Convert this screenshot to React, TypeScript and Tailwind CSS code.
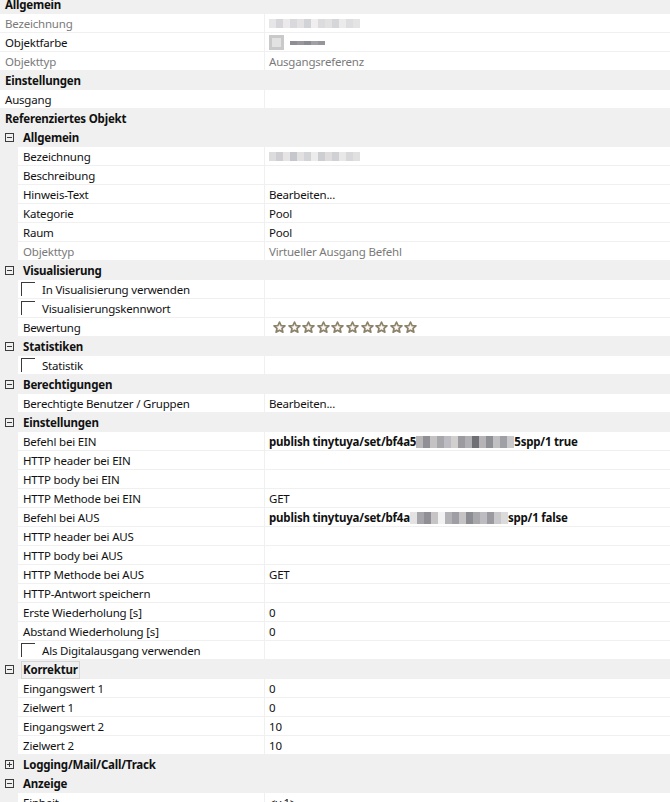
import React from 'react';

type Row =
  | { kind: 'top'; title: string }
  | { kind: 'group'; title: string; open?: boolean; focus?: boolean }
  | { kind: 'prop'; label: string; value?: React.ReactNode; top?: boolean; muted?: boolean; check?: boolean; bold?: boolean };

const font = { fontFamily: '"Noto Sans", "Open Sans", sans-serif' };

const Expander: React.FC<{ open?: boolean }> = ({ open = true }) => (
  <svg width="9" height="9" viewBox="0 0 9 9" className="shrink-0">
    <rect x="0.5" y="0.5" width="8" height="8" fill="none" stroke="#3c3c3c" />
    <line x1="2" y1="4.5" x2="7" y2="4.5" stroke="#3c3c3c" />
    {!open && <line x1="4.5" y1="2" x2="4.5" y2="7" stroke="#3c3c3c" />}
  </svg>
);

const Star: React.FC = () => (
  <svg width="13" height="13" viewBox="0 0 24 24">
    <path
      d="M12 1.8l3 6.5 7.1.7-5.4 4.8 1.6 7L12 17.2l-6.3 3.6 1.6-7L1.9 9l7.1-.7z"
      fill="#e3ddcf"
      stroke="#8d836c"
      strokeWidth="3"
      strokeLinejoin="round"
    />
    <path d="M12 7.5l1.4 3 3.3.4-2.5 2.2.7 3.2L12 14.6l-2.9 1.7.7-3.2-2.5-2.2 3.3-.4z" fill="#fbfaf6" />
  </svg>
);

const Mosaic: React.FC<{ colors: string[]; w?: number; h?: number }> = ({ colors, w = 7, h = 10 }) => (
  <span className="inline-flex align-middle">
    {colors.map((c, i) => (
      <span key={i} className="inline-block" style={{ width: w, height: h, background: c }} />
    ))}
  </span>
);

const paleName = ['#e6e6e8', '#d6d6da', '#ebe9e9', '#d9d9dd', '#e4e2e2', '#d2d3d7', '#f0eeee', '#dcdcdf', '#e3e1e1', '#d5d6da', '#ebebeb', '#dedee1', '#e5e4e4'];

const Stars = () => (
  <div className="flex gap-[1.6px] pl-[4px]">
    {Array.from({ length: 10 }).map((_, i) => (
      <Star key={i} />
    ))}
  </div>
);

const Publish: React.FC<{ prefix: string; suffix: string; colors: string[] }> = ({ prefix, suffix, colors }) => (
  <span className="inline-flex items-center font-bold">
    <span>{prefix}</span>
    <Mosaic colors={colors} w={7} h={12} />
    <span>{suffix}</span>
  </span>
);

const rows: Row[] = [
  { kind: 'top', title: 'Allgemein' },
  { kind: 'prop', top: true, muted: true, label: 'Bezeichnung', value: <Mosaic colors={paleName} w={7} h={9} /> },
  {
    kind: 'prop',
    top: true,
    label: 'Objektfarbe',
    value: (
      <span className="flex items-center gap-[6px]">
        <span className="inline-block w-[15px] h-[15px] bg-[#e2e2e2] border-[3px] border-[#c9c9c9]" />
        <Mosaic colors={['#8e8e96', '#9a969c', '#8a8b94', '#a39fa3', '#95969c']} w={7} h={4} />
      </span>
    ),
  },
  { kind: 'prop', top: true, muted: true, label: 'Objekttyp', value: <span className="text-[#7a7a7a]">Ausgangsreferenz</span> },
  { kind: 'top', title: 'Einstellungen' },
  { kind: 'prop', top: true, label: 'Ausgang' },
  { kind: 'top', title: 'Referenziertes Objekt' },
  { kind: 'group', title: 'Allgemein' },
  { kind: 'prop', label: 'Bezeichnung', value: <Mosaic colors={['#dcdcdf', '#cfcfd3', '#e6e4e4', '#c6c7cc', '#e2e0e0', '#d3d4d8', '#ececec', '#cdced2', '#dedcdc', '#d0d1d5', '#e8e8e8', '#d8d8db', '#e1e0e0']} w={7} h={9} /> },
  { kind: 'prop', label: 'Beschreibung' },
  { kind: 'prop', label: 'Hinweis-Text', value: 'Bearbeiten...' },
  { kind: 'prop', label: 'Kategorie', value: 'Pool' },
  { kind: 'prop', label: 'Raum', value: 'Pool' },
  { kind: 'prop', muted: true, label: 'Objekttyp', value: <span className="text-[#7a7a7a]">Virtueller Ausgang Befehl</span> },
  { kind: 'group', title: 'Visualisierung' },
  { kind: 'prop', check: true, label: 'In Visualisierung verwenden' },
  { kind: 'prop', check: true, label: 'Visualisierungskennwort' },
  { kind: 'prop', label: 'Bewertung', value: <Stars /> },
  { kind: 'group', title: 'Statistiken' },
  { kind: 'prop', check: true, label: 'Statistik' },
  { kind: 'group', title: 'Berechtigungen' },
  { kind: 'prop', label: 'Berechtigte Benutzer / Gruppen', value: 'Bearbeiten...' },
  { kind: 'group', title: 'Einstellungen' },
  {
    kind: 'prop',
    label: 'Befehl bei EIN',
    value: (
      <Publish
        prefix="publish tinytuya/set/bf4a5"
        suffix="5spp/1 true"
        colors={['#b9b6b8', '#8f8f95', '#c4c2c3', '#a7a6ab', '#bcbcc2', '#d2d0cf', '#9b9a9f', '#b0afb4', '#6f6f76', '#b6b4b6', '#8e9096', '#c0bfc2', '#9fa0a6', '#c9c8ca']}
      />
    ),
  },
  { kind: 'prop', label: 'HTTP header bei EIN' },
  { kind: 'prop', label: 'HTTP body bei EIN' },
  { kind: 'prop', label: 'HTTP Methode bei EIN', value: 'GET' },
  {
    kind: 'prop',
    label: 'Befehl bei AUS',
    value: (
      <Publish
        prefix="publish tinytuya/set/bf4a"
        suffix="spp/1 false"
        colors={['#e4e2e3', '#a6a5aa', '#8f8f95', '#c6c4c5', '#f2f2f2', '#b3b2b6', '#9e9ea4', '#c5c3c4', '#8c8c93', '#a8a7ac', '#bdbcc0', '#9a9aa0', '#c9c8ca', '#dcdbdc']}
      />
    ),
  },
  { kind: 'prop', label: 'HTTP header bei AUS' },
  { kind: 'prop', label: 'HTTP body bei AUS' },
  { kind: 'prop', label: 'HTTP Methode bei AUS', value: 'GET' },
  { kind: 'prop', label: 'HTTP-Antwort speichern' },
  { kind: 'prop', label: 'Erste Wiederholung [s]', value: '0' },
  { kind: 'prop', label: 'Abstand Wiederholung [s]', value: '0' },
  { kind: 'prop', check: true, label: 'Als Digitalausgang verwenden' },
  { kind: 'group', title: 'Korrektur', focus: true },
  { kind: 'prop', label: 'Eingangswert 1', value: '0' },
  { kind: 'prop', label: 'Zielwert 1', value: '0' },
  { kind: 'prop', label: 'Eingangswert 2', value: '10' },
  { kind: 'prop', label: 'Zielwert 2', value: '10' },
  { kind: 'group', title: 'Logging/Mail/Call/Track', open: false },
  { kind: 'group', title: 'Anzeige' },
  { kind: 'prop', label: 'Einheit', value: '<v.1>' },
];

const GridRow: React.FC<{ row: Row }> = ({ row }) => {
  if (row.kind === 'top') {
    return (
      <div className="flex items-center h-[19px] bg-[#f0f0f0] pl-[5px] pt-[1px] font-bold">{row.title}</div>
    );
  }
  if (row.kind === 'group') {
    return (
      <div className="flex items-center h-[19px] bg-[#f0f0f0] font-bold">
        <div className="w-[18px] flex justify-center pl-[1px]">
          <Expander open={row.open !== false} />
        </div>
        <span
          className={
            row.focus
              ? 'ml-[3px] pl-[1px] pr-[1px] h-[18px] pt-[1px] flex items-center border border-[#d6d6d6]'
              : 'ml-[5px] pt-[1px]'
          }
        >
          {row.title}
        </span>
      </div>
    );
  }
  return (
    <div className="flex h-[19px]">
      {!row.top && <div className="w-[18px] shrink-0 bg-[#f0f0f0]" />}
      <div
        className={`${row.top ? 'w-[264px]' : 'w-[246px]'} shrink-0 flex items-center pt-[1px] border-b border-[#f0f0f0] ${
          row.check ? 'pl-[3px]' : 'pl-[5px]'
        } ${row.muted ? 'text-[#7a7a7a]' : ''}`}
      >
        {row.check && (
          <span className="inline-block w-[14px] h-[14px] border-l border-t border-[#3a3a3a] mr-[7px] -mt-[1px]" />
        )}
        {row.label}
      </div>
      <div className="w-px bg-[#f0f0f0]" />
      <div className="flex-1 flex items-center pl-[4px] pt-[1px] border-b border-[#f0f0f0] whitespace-nowrap overflow-hidden">
        {row.value}
      </div>
    </div>
  );
};

export default function App() {
  return (
    <div
      className="w-[670px] h-[802px] overflow-hidden bg-white text-[11.5px] tracking-[-0.2px] text-[#111111] leading-none"
      style={font}
    >
      <div className="-mt-[5px]">
        {rows.map((r, i) => (
          <GridRow key={i} row={r} />
        ))}
      </div>
    </div>
  );
}
